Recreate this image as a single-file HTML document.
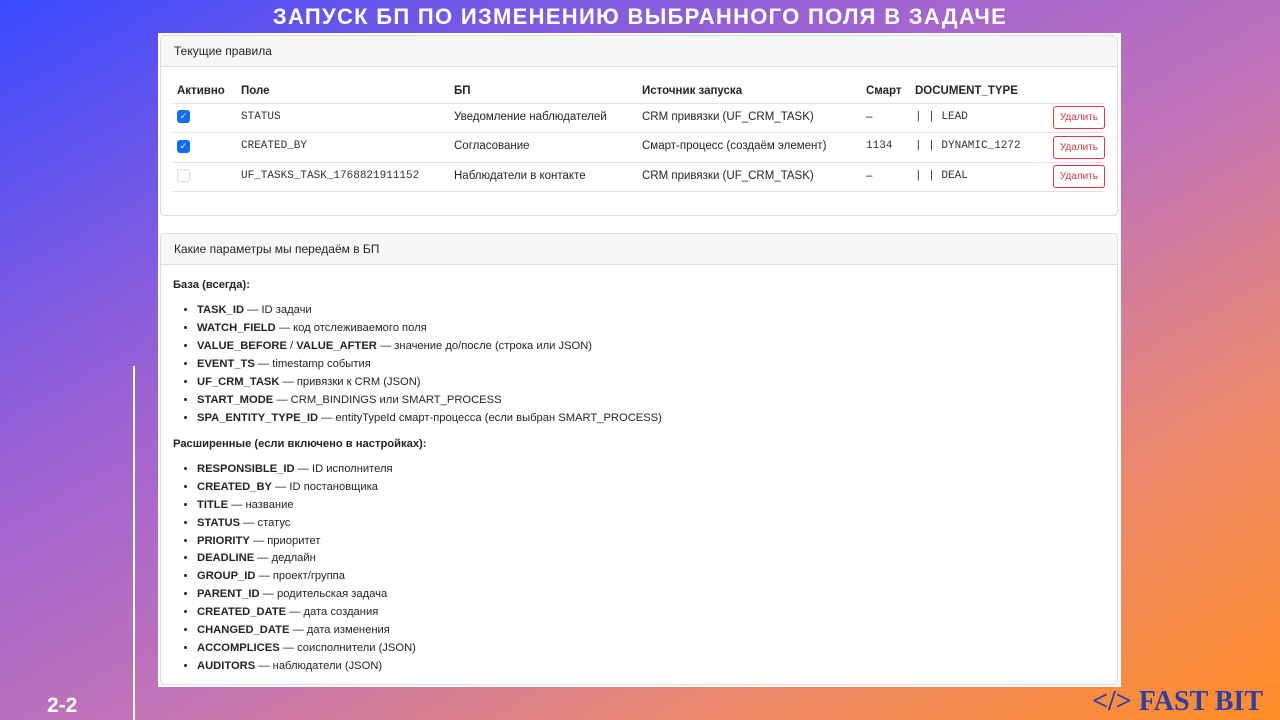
<!DOCTYPE html>
<html><head><meta charset="utf-8">
<style>
*{box-sizing:border-box;margin:0;padding:0}
body{width:1280px;height:720px;overflow:hidden;position:relative;font-family:"Liberation Sans",sans-serif;color:#212529;
background:linear-gradient(to bottom right,#3a4bff 0%,#9c62d4 33%,#c274b8 55%,#ee8a6a 78%,#ff8d26 100%);}
h1{position:absolute;top:4px;left:0;width:1280px;text-align:center;color:#fff;font-size:22px;font-weight:bold;letter-spacing:1.3px}
.panel{position:absolute;left:158px;top:33px;width:963px;height:654px;background:#fff}
.card{position:absolute;left:2px;width:958px;border:1px solid #dcdcdc;border-radius:4px;background:#fff}
.ch{height:31px;background:#f7f7f7;border-bottom:1px solid #dcdcdc;font-size:12px;line-height:30px;padding-left:13px;border-radius:4px 4px 0 0}
table{position:absolute;left:12px;top:43px;width:932px;border-collapse:collapse;font-size:11.5px}
th{text-align:left;font-weight:bold;height:24px;border-bottom:1px solid #dee2e6;padding-left:4px}
td{height:29.5px;border-bottom:1px solid #dee2e6;padding-left:4px;padding-bottom:2px}
.mono{font-family:"Liberation Mono",monospace;font-size:11px;color:#333}
.cb{display:inline-block;width:13px;height:13px;border-radius:3px;background:#0d6efd;color:#fff;font-size:9px;line-height:13px;text-align:center;vertical-align:middle}
.cb.off{background:#fff;border:1px solid #ddd}
.btn{display:inline-block;border:1px solid #dc3545;color:#dc3545;border-radius:3px;font-size:10px;padding:0 6px;height:23px;line-height:21px;margin-top:2px}
.body{padding:12px 12px;font-size:11.2px;line-height:17.7px}
.body b{font-weight:bold}
ul{margin:7.5px 0 8.3px 24px}
li{height:17.9px;line-height:17.9px}
.num{position:absolute;left:47px;top:694px;color:#fff;font-weight:bold;font-size:21px}
.vl{position:absolute;left:133px;top:366px;width:2px;height:354px;background:#fff}
.logo{position:absolute;right:17px;top:686px;color:#2f3fa8;font-family:"Liberation Serif",serif;font-weight:bold;font-size:28px}
</style></head><body>
<h1>ЗАПУСК БП ПО ИЗМЕНЕНИЮ ВЫБРАННОГО ПОЛЯ В ЗАДАЧЕ</h1>
<div class="panel">
<div class="card" style="top:2px;height:181px">
<div class="ch">Текущие правила</div>
<table>
<tr><th style="width:64px">Активно</th><th style="width:213px">Поле</th><th style="width:188px">БП</th><th style="width:224px">Источник запуска</th><th style="width:49px">Смарт</th><th>DOCUMENT_TYPE</th><th></th></tr>
<tr><td><span class="cb">✓</span></td><td class="mono">STATUS</td><td>Уведомление наблюдателей</td><td>CRM привязки (UF_CRM_TASK)</td><td>–</td><td class="mono">| | LEAD</td><td style="text-align:right"><span class="btn">Удалить</span></td></tr>
<tr><td><span class="cb">✓</span></td><td class="mono">CREATED_BY</td><td>Согласование</td><td>Смарт-процесс (создаём элемент)</td><td class="mono">1134</td><td class="mono">| | DYNAMIC_1272</td><td style="text-align:right"><span class="btn">Удалить</span></td></tr>
<tr><td><span class="cb off"></span></td><td class="mono">UF_TASKS_TASK_1768821911152</td><td>Наблюдатели в контакте</td><td>CRM привязки (UF_CRM_TASK)</td><td>–</td><td class="mono">| | DEAL</td><td style="text-align:right"><span class="btn">Удалить</span></td></tr>
</table>
</div>
<div class="card" style="top:200px;height:452px">
<div class="ch">Какие параметры мы передаём в БП</div>
<div class="body">
<b>База (всегда):</b>
<ul>
<li><b>TASK_ID</b> — ID задачи</li>
<li><b>WATCH_FIELD</b> — код отслеживаемого поля</li>
<li><b>VALUE_BEFORE</b> / <b>VALUE_AFTER</b> — значение до/после (строка или JSON)</li>
<li><b>EVENT_TS</b> — timestamp события</li>
<li><b>UF_CRM_TASK</b> — привязки к CRM (JSON)</li>
<li><b>START_MODE</b> — CRM_BINDINGS или SMART_PROCESS</li>
<li><b>SPA_ENTITY_TYPE_ID</b> — entityTypeId смарт-процесса (если выбран SMART_PROCESS)</li>
</ul>
<b>Расширенные (если включено в настройках):</b>
<ul>
<li><b>RESPONSIBLE_ID</b> — ID исполнителя</li>
<li><b>CREATED_BY</b> — ID постановщика</li>
<li><b>TITLE</b> — название</li>
<li><b>STATUS</b> — статус</li>
<li><b>PRIORITY</b> — приоритет</li>
<li><b>DEADLINE</b> — дедлайн</li>
<li><b>GROUP_ID</b> — проект/группа</li>
<li><b>PARENT_ID</b> — родительская задача</li>
<li><b>CREATED_DATE</b> — дата создания</li>
<li><b>CHANGED_DATE</b> — дата изменения</li>
<li><b>ACCOMPLICES</b> — соисполнители (JSON)</li>
<li><b>AUDITORS</b> — наблюдатели (JSON)</li>
</ul>
</div>
</div>
</div>
<div class="vl"></div>
<div class="num">2-2</div>
<div class="logo">&lt;/&gt; FAST BIT</div>
</body></html>
